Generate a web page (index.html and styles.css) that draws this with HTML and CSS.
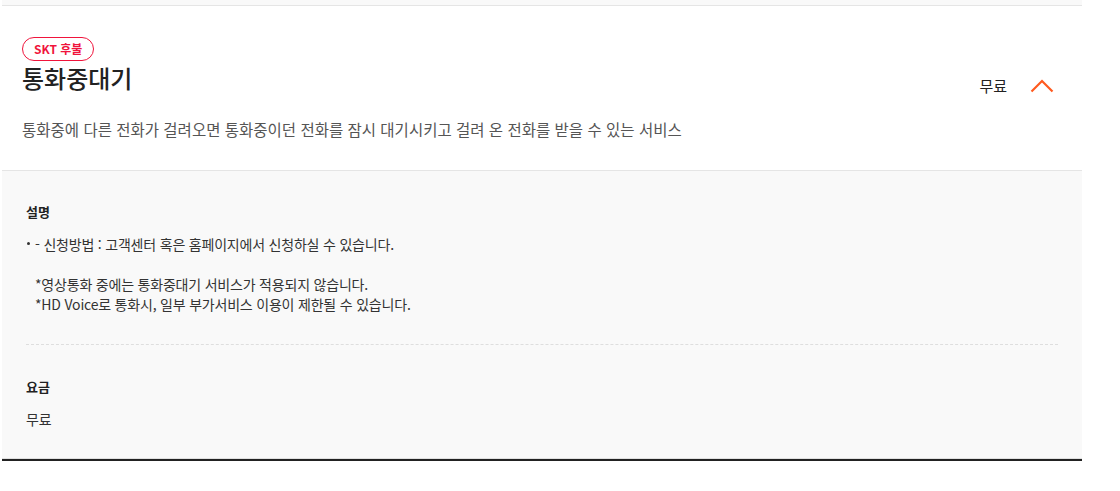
FILE: index.html
```html
<!DOCTYPE html>
<html lang="ko">
<head>
  <meta charset="UTF-8">
  <title>부가서비스 - 통화중대기</title>
  <link rel="stylesheet" href="styles.css">
</head>
<body>

<div class="service-list">
  <div class="prev-tail"></div>

  <div class="service-item open">
    <div class="service-head">
      <div class="head-info">
        <span class="badge">SKT 후불</span>
        <h2 class="service-name">통화중대기</h2>
        <p class="service-desc">통화중에 다른 전화가 걸려오면 통화중이던 전화를 잠시 대기시키고 걸려 온 전화를 받을 수 있는 서비스</p>
      </div>
      <div class="head-side">
        <span class="price">무료</span>
        <button class="toggle" aria-label="접기">
          <svg width="24" height="14" viewBox="0 0 24 14"><polyline points="1.5,12.5 12,2 22.5,12.5" fill="none" stroke="#ff5a1f" stroke-width="2.2"/></svg>
        </button>
      </div>
    </div>

    <div class="service-body">
      <div class="detail-block">
        <h3>설명</h3>
        <ul>
          <li>- 신청방법 : 고객센터 혹은 홈페이지에서 신청하실 수 있습니다.<br><br>*영상통화 중에는 통화중대기 서비스가 적용되지 않습니다.<br>*HD Voice로 통화시, 일부 부가서비스 이용이 제한될 수 있습니다.</li>
        </ul>
      </div>
      <div class="detail-block">
        <h3>요금</h3>
        <p>무료</p>
      </div>
    </div>
  </div>
</div>

</body>
</html>
```

FILE: styles.css
```css
body { margin: 0; padding: 0; background: #fff; font-family: "Noto Sans CJK KR", "Noto Sans", sans-serif; color: #222; }
.service-list { width: 1080px; margin-left: 2px; }
.prev-tail { height: 5px; background: #f9f9f9; border-bottom: 1px solid #e5e5e5; }
.service-item.open { border-bottom: 2px solid #222; }
.service-head { display: flex; align-items: center; padding: 29px 28px 30px 20px; border-bottom: 1px solid #e5e5e5; }
.head-info { flex: 1; }
.badge { display: inline-block; height: 22px; line-height: 22px; padding: 0 11px; border: 1px solid #f0143c; border-radius: 12px; color: #f0143c; font-size: 12px; font-weight: bold; }
.service-name { margin: 1px 0 0; font-size: 24px; line-height: 32px; font-weight: 500; color: #222; }
.service-desc { margin: 24px 0 0; font-size: 15.5px; line-height: 22px; color: #555; }
.head-side { display: flex; align-items: center; gap: 23px; margin-top: -4px; }
.price { font-size: 15px; color: #222; }
.toggle { border: none; background: none; padding: 0; width: 24px; height: 14px; cursor: pointer; display: block; }
.toggle svg { display: block; }
.service-body { background: #f9f9f9; padding: 1px 24px 29px 24px; border-bottom: 1px solid #e0e0e0; }
.detail-block { padding-top: 30px; }
.detail-block + .detail-block { margin-top: 30px; padding-top: 32px; border-top: 1px dashed #dedede; }
.detail-block h3 { margin: 0 0 12px; font-size: 13px; line-height: 20px; font-weight: bold; color: #222; }
.detail-block ul { margin: 0; padding: 0; list-style: none; }
.detail-block li { position: relative; padding-left: 9px; font-size: 14px; letter-spacing: -0.2px; line-height: 20px; color: #333; }
.detail-block li::before { content: ""; position: absolute; left: 1px; top: 8px; width: 3px; height: 3px; background: #333; border-radius: 50%; }
.detail-block p { margin: 0; font-size: 14px; letter-spacing: -0.2px; line-height: 20px; color: #333; }
```
